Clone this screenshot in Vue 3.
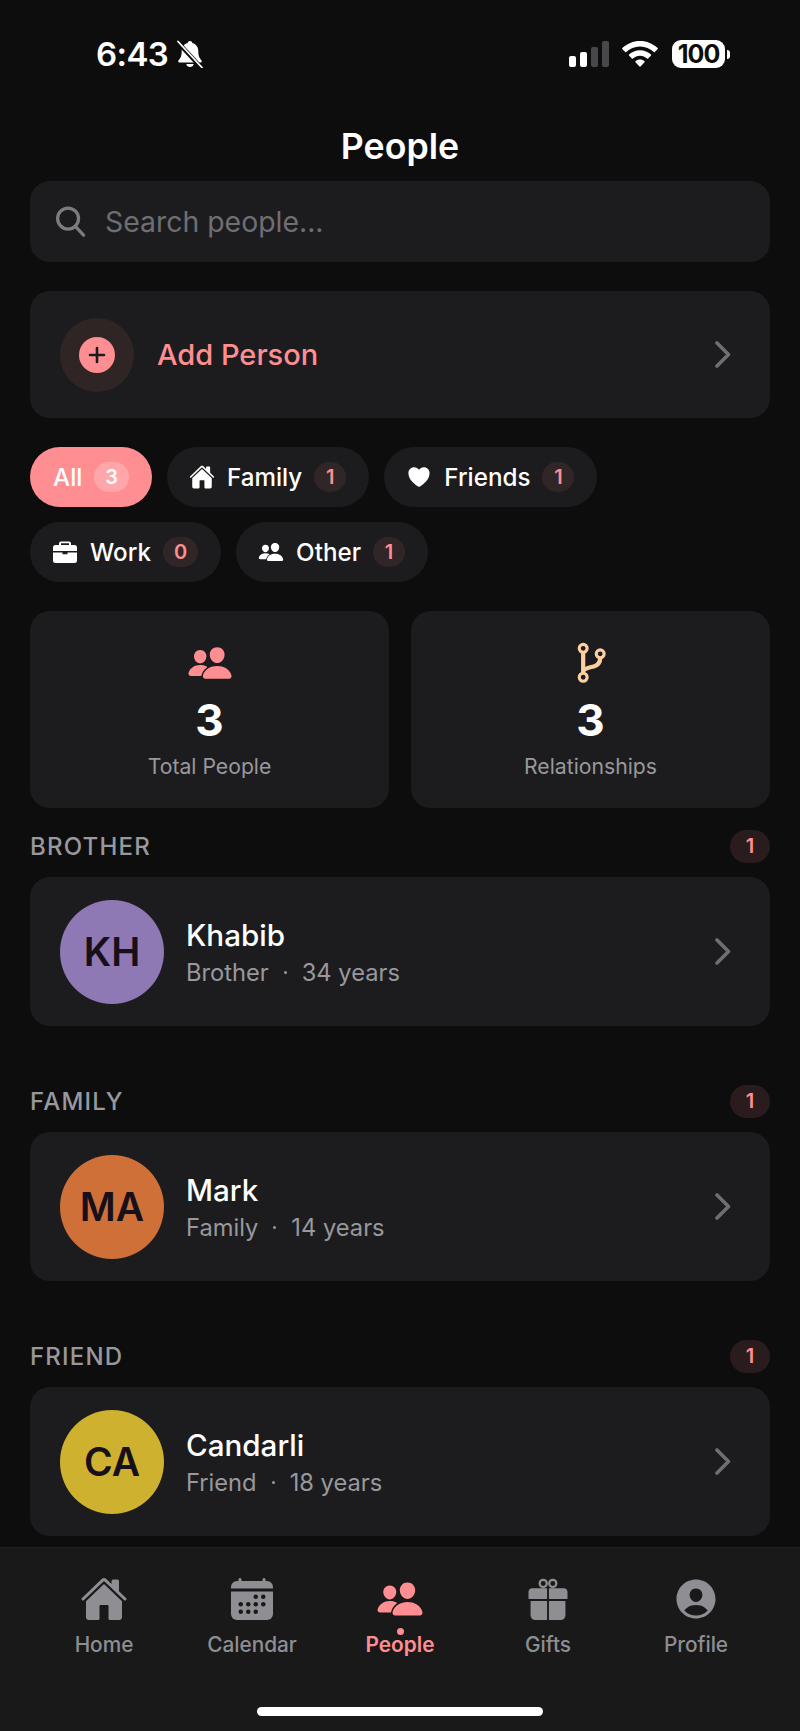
<template>
  <div class="screen">
    <div class="status">
      <div class="status-left">
        <span class="time">6:43</span>
        <svg class="bell" viewBox="0 0 28 28">
          <path fill="#fff" d="M14 1c1.300 0 2.200.9 2.300 2.100 3.800.9 6 4.100 6 8 0 4.900 1.100 7 3.200 9.300.7.800.3 2-.9 2H3.400c-1.200 0-1.600-1.200-.9-2 2.100-2.300 3.200-4.400 3.200-9.300 0-3.900 2.200-7.100 6-8C11.800 1.900 12.700 1 14 1z" />
          <path fill="#fff" d="M10.300 24h7.400c-.3 1.700-1.800 3-3.700 3s-3.400-1.300-3.700-3z" />
          <path stroke="#0d0d0d" stroke-width="4.200" d="M2.500 3l23 25" />
          <path stroke="#fff" stroke-width="1.800" stroke-linecap="round" d="M2 1.500l24 26" />
        </svg>
      </div>
      <div class="status-right">
        <div class="signal">
          <i class="on" style="height: 11px"></i>
          <i class="on" style="height: 15px"></i>
          <i style="height: 20px"></i>
          <i style="height: 26px"></i>
        </div>
        <svg class="wifi" viewBox="0 0 36 26">
          <path fill="#fff" d="M18 0c6.900 0 13.100 2.700 17.700 7.100.3.300.3.700 0 1l-2.900 3c-.3.300-.7.300-1 0C28.200 7.600 23.300 5.500 18 5.500S7.800 7.600 4.200 11.100c-.3.300-.7.300-1 0l-2.900-3c-.3-.3-.3-.7 0-1C4.900 2.700 11.100 0 18 0z" />
          <path fill="#fff" d="M18 9.200c4.300 0 8.100 1.700 11 4.300.3.300.3.700 0 1l-2.900 3c-.3.300-.7.300-1 0-1.900-1.700-4.400-2.800-7.100-2.800s-5.200 1.100-7.100 2.800c-.3.300-.7.300-1 0l-2.900-3c-.3-.3-.3-.7 0-1 2.900-2.600 6.700-4.300 11-4.300z" />
          <path fill="#fff" d="M18 18.500c1.800 0 3.300.6 4.500 1.700.3.300.3.700 0 1l-4 4.200c-.3.300-.7.300-1 0l-4-4.200c-.3-.3-.3-.7 0-1 1.200-1.100 2.700-1.700 4.500-1.700z" />
        </svg>
        <div class="battery">
          <span class="battery-level">100</span>
          <i class="battery-cap"></i>
        </div>
      </div>
    </div>

    <div class="content">
      <div class="title">People</div>

      <div class="search">
        <svg class="search-icon" viewBox="0 0 32 32" fill="none" stroke="#7b7b80" stroke-width="3.400" stroke-linecap="round">
          <circle cx="13.500" cy="13" r="10.800" />
          <path d="M21.500 21.500l8 8.500" />
        </svg>
        <span>Search people...</span>
      </div>

      <div class="add-card">
        <div class="add-ring">
          <div class="add-dot">
            <svg viewBox="0 0 20 20" width="20" height="20" stroke="#1c1c1e" stroke-width="2.600" stroke-linecap="round">
              <path d="M10 3v14M3 10h14" />
            </svg>
          </div>
        </div>
        <span class="add-label">Add Person</span>
        <svg class="chevron" viewBox="0 0 16 27" fill="none">
          <path d="M2 2l11.500 11.500L2 25" />
        </svg>
      </div>

      <div class="chips">
        <div v-for="chip in chips" :key="chip.label" class="chip" :class="{ active: chip.active }">
          <svg v-if="chip.icon === 'home'" class="chip-icon" viewBox="0 0 512 512" fill="#fff">
            <path :d="homeA" /><path :d="homeB" />
          </svg>
          <svg v-else-if="chip.icon === 'heart'" class="chip-icon" viewBox="0 0 512 512" fill="#fff">
            <path :d="heart" />
          </svg>
          <svg v-else-if="chip.icon === 'work'" class="chip-icon" viewBox="0 0 26 26" fill="#fff">
            <path fill-rule="evenodd" d="M9 2.500h8a2 2 0 012 2V6h3.500A2.500 2.500 0 0125 8.500V12H1V8.500A2.500 2.500 0 013.500 6H7V4.500a2 2 0 012-2zM9 4.300V6h8V4.300H9z" />
            <path d="M1 13.400h9.500v1.800h5v-1.800H25v8.100a2.500 2.500 0 01-2.500 2.500h-19A2.500 2.500 0 011 21.500v-8.100z" />
          </svg>
          <svg v-else-if="chip.icon === 'people'" class="chip-icon" viewBox="0 0 512 512" fill="#fff">
            <path v-for="d in people" :key="d" :d="d" />
          </svg>
          <span class="chip-label">{{ chip.label }}</span>
          <span class="chip-count">{{ chip.count }}</span>
        </div>
      </div>

      <div class="stats">
        <div class="stat">
          <svg class="stat-icon" viewBox="0 0 512 512" fill="#ff8e92">
            <path v-for="d in people" :key="d" :d="d" />
          </svg>
          <div class="stat-num">3</div>
          <div class="stat-label">Total People</div>
        </div>
        <div class="stat">
          <svg class="stat-icon" viewBox="-2 -2 50 50" fill="none" stroke="#fdd0a2" stroke-width="3.400">
            <circle cx="14.500" cy="7" r="4.300" />
            <circle cx="33" cy="13" r="4.300" />
            <circle cx="14.500" cy="38.500" r="4.300" />
            <path stroke-width="4.600" d="M14.500 11v23.500M33 17.500c0 6-3 8-7 9.200-4 1.200-9.800 2-11.500 5" />
          </svg>
          <div class="stat-num">3</div>
          <div class="stat-label">Relationships</div>
        </div>
      </div>

      <div v-for="group in groups" :key="group.title" class="group">
        <div class="group-head">
          <span class="group-title">{{ group.title }}</span>
          <span class="group-count">1</span>
        </div>
        <div class="person">
          <div class="avatar" :style="{ backgroundColor: group.color }">{{ group.initials }}</div>
          <div class="person-info">
            <div class="person-name">{{ group.name }}</div>
            <div class="person-meta">
              <span>{{ group.relation }}</span>
              <i class="meta-dot"></i>
              <span>{{ group.age }} years</span>
            </div>
          </div>
          <svg class="chevron" viewBox="0 0 16 27" fill="none">
            <path d="M2 2l11.500 11.500L2 25" />
          </svg>
        </div>
      </div>
    </div>

    <div class="tabbar">
      <div class="tabs">
        <div class="tab">
          <svg class="tab-icon" viewBox="0 0 512 512" fill="#8e8e93">
            <path :d="homeA" /><path :d="homeB" />
          </svg>
          <span>Home</span>
        </div>
        <div class="tab">
          <svg class="tab-icon" viewBox="0 0 512 512" fill="#8e8e93">
            <path :d="calendarTop" />
            <path :d="calendarBody" />
            <circle v-for="dot in calendarDots" :key="dot.join()" :cx="dot[0]" :cy="dot[1]" r="24" fill="#19191a" />
          </svg>
          <span>Calendar</span>
        </div>
        <div class="tab active">
          <svg class="tab-icon" viewBox="0 0 512 512" fill="#ff8e92">
            <path v-for="d in people" :key="d" :d="d" />
          </svg>
          <i class="tab-dot"></i>
          <span>People</span>
        </div>
        <div class="tab">
          <svg class="tab-icon" viewBox="0 0 512 512" fill="#8e8e93">
            <circle cx="205" cy="90" r="38" fill="none" stroke="#8e8e93" stroke-width="24" />
            <circle cx="307" cy="90" r="38" fill="none" stroke="#8e8e93" stroke-width="24" />
            <path d="M90 140h156v116H48v-74a42 42 0 0142-42zM266 140h156a42 42 0 0142 42v74H266z" />
            <path d="M70 277h176v203H120a50 50 0 01-50-50zM266 277h176v153a50 50 0 01-50 50H266z" />
          </svg>
          <span>Gifts</span>
        </div>
        <div class="tab">
          <svg class="tab-icon" viewBox="0 0 512 512" fill="#8e8e93">
            <path :d="profile" />
          </svg>
          <span>Profile</span>
        </div>
      </div>
      <div class="home-bar"></div>
    </div>
  </div>
</template>

<script setup>
  const homeA =
    "M261.56 101.28a8 8 0 00-11.06 0L66.4 277.15a8 8 0 00-2.47 5.79L63.9 448a32 32 0 0032 32H192a16 16 0 0016-16V328a8 8 0 018-8h80a8 8 0 018 8v136a16 16 0 0016 16h96.06a32 32 0 0032-32V282.94a8 8 0 00-2.47-5.79z";
  const homeB =
    "M490.91 244.15l-74.8-71.56V64a16 16 0 00-16-16h-48a16 16 0 00-16 16v32l-57.92-55.38C272.77 35.14 264.71 32 256 32c-8.68 0-16.72 3.14-22.14 8.63l-212.7 203.5c-6.22 6-7 15.87-1.34 22.37A16 16 0 0043 267.56L250.5 69.28a8 8 0 0111.06 0l207.52 198.28a16 16 0 0022.59-.44c6.14-6.36 5.63-16.86-.76-22.97z";
  const heart =
    "M256 448a32 32 0 01-18-5.57c-78.59-53.35-112.62-90.77-131.39-113.64-40-48.75-59.15-98.8-58.61-153C48.63 114.52 98.46 64 159.08 64c44.08 0 74.61 24.83 92.39 45.51a6 6 0 009.06 0C278.31 88.81 308.84 64 352.92 64c60.62 0 110.45 50.52 111.08 112.64.54 54.21-18.63 104.26-58.61 153-18.77 22.87-52.8 60.29-131.39 113.83a32 32 0 01-18 5.53z";
  const people = [
    "M336 256c-20.56 0-40.44-9.18-56-25.84-15.13-16.25-24.37-37.92-26-61-1.74-24.62 5.77-47.26 21.14-63.76S312 80 336 80c23.83 0 45.38 9.06 60.7 25.52 15.47 16.62 23 39.22 21.26 63.63-1.67 23.11-10.9 44.77-26 61C376.44 246.82 356.57 256 336 256z",
    "M467.83 432H204.18a27.71 27.71 0 01-22-10.67 30.22 30.22 0 01-5.26-25.79c8.42-33.81 29.28-61.85 60.32-81.08C264.79 297.4 299.86 288 336 288c36.85 0 71 9 98.71 26.05 31.11 19.13 52 47.33 60.38 81.55a30.27 30.27 0 01-5.32 25.78A27.68 27.68 0 01467.83 432z",
    "M147 260c-35.19 0-66.13-32.72-69-72.93-1.42-20.6 5-39.65 18-53.62 12.86-13.83 31-21.45 51-21.45s38 7.66 50.93 21.57c13.1 14.08 19.5 33.09 18 53.52-2.87 40.2-33.8 72.91-69 72.91z",
    "M212.66 291.45c-17.59-8.6-40.42-12.9-65.65-12.9-29.46 0-58.07 7.68-80.57 21.62-25.51 15.83-42.67 38.88-49.6 66.71a27.39 27.39 0 005.36 23.36A25.32 25.32 0 0042.34 400h111a8 8 0 007.87-6.57c.11-.63.25-1.26.41-1.88 8.48-34.06 28.35-62.84 57.71-83.82a8 8 0 00-.63-13.39c-1.57-.92-3.37-1.89-6.05-3.19z",
  ];
  const calendarTop =
    "M480 128a64 64 0 00-64-64h-16V48.45c0-8.61-6.62-16-15.23-16.43A16 16 0 00368 48v16H144V48.45c0-8.61-6.62-16-15.23-16.43A16 16 0 00112 48v16H96a64 64 0 00-64 64v12a4 4 0 004 4h440a4 4 0 004-4z";
  const calendarBody =
    "M32 416a64 64 0 0064 64h320a64 64 0 0064-64V179a3 3 0 00-3-3H35a3 3 0 00-3 3z";
  const calendarDots = [
    [296, 232], [376, 232],
    [136, 312], [216, 312], [296, 312], [376, 312],
    [136, 392], [216, 392], [296, 392],
  ];
  const profile =
    "M256 48C141.31 48 48 141.31 48 256s93.31 208 208 208 208-93.31 208-208S370.69 48 256 48zm-50.22 116.82C218.45 151.39 236.28 144 256 144s37.39 7.44 50.11 20.94c12.89 13.68 19.16 32.06 17.68 51.82C320.83 256 290.43 288 256 288s-64.89-32-67.79-71.25c-1.47-19.92 4.79-38.36 17.57-51.93zM256 432a175.49 175.49 0 01-126-53.22 122.91 122.91 0 0135.14-33.44C190.63 329 222.89 320 256 320s65.37 9 90.83 25.34A122.87 122.87 0 01382 378.78 175.45 175.45 0 01256 432z";

  const chips = [
    { label: "All", count: 3, active: true },
    { label: "Family", count: 1, icon: "home" },
    { label: "Friends", count: 1, icon: "heart" },
    { label: "Work", count: 0, icon: "work" },
    { label: "Other", count: 1, icon: "people" },
  ];

  const groups = [
    { title: "BROTHER", name: "Khabib", relation: "Brother", age: 34, initials: "KH", color: "#8e79b4" },
    { title: "FAMILY", name: "Mark", relation: "Family", age: 14, initials: "MA", color: "#cf7038" },
    { title: "FRIEND", name: "Candarli", relation: "Friend", age: 18, initials: "CA", color: "#ceb22f" },
  ];
</script>

<style>
  html,
  body {
    margin: 0;
    background: #0d0d0d;
  }
</style>

<style scoped>
  .screen {
    width: 800px;
    height: 1731px;
    display: flex;
    flex-direction: column;
    overflow: hidden;
    background: #0d0d0d;
    color: #fff;
    font-family: Inter, "Liberation Sans", sans-serif;
  }

  .status {
    flex: none;
    height: 112px;
    box-sizing: border-box;
    padding: 36px 70px 0 96px;
    display: flex;
    justify-content: space-between;
    align-items: flex-start;
  }
  .status-left,
  .status-right {
    height: 36px;
    display: flex;
    align-items: center;
  }
  .time {
    font-size: 33px;
    font-weight: 600;
    letter-spacing: -0.6px;
    line-height: 36px;
  }
  .bell {
    width: 28px;
    height: 28px;
    margin-left: 8px;
  }
  .signal {
    display: flex;
    align-items: flex-end;
    gap: 4px;
    height: 26px;
  }
  .signal i {
    width: 7px;
    border-radius: 2px;
    background: #48484a;
  }
  .signal .on {
    background: #fff;
  }
  .wifi {
    width: 36px;
    height: 26px;
    margin-left: 13px;
  }
  .battery {
    display: flex;
    align-items: center;
    margin-left: 14px;
  }
  .battery-level {
    width: 53px;
    height: 28px;
    border-radius: 9px;
    background: #fff;
    color: #0d0d0d;
    font-size: 25px;
    font-weight: 700;
    letter-spacing: -1px;
    line-height: 28px;
    text-align: center;
  }
  .battery-cap {
    width: 3px;
    height: 9px;
    margin-left: 2px;
    border-radius: 0 3px 3px 0;
    background: #fff;
  }

  .content {
    flex: 1;
    min-height: 0;
    overflow: hidden;
    padding: 0 30px;
  }
  .title {
    height: 69px;
    line-height: 69px;
    text-align: center;
    font-size: 35.700px;
    font-weight: 600;
  }

  .search {
    height: 81px;
    display: flex;
    align-items: center;
    gap: 19px;
    padding: 0 25px;
    border-radius: 20px;
    background: #1c1c1e;
    color: #6e6e73;
    font-size: 28.400px;
  }
  .search-icon {
    width: 31px;
    height: 31px;
    flex: none;
  }

  .add-card {
    height: 127px;
    margin-top: 29px;
    display: flex;
    align-items: center;
    padding: 0 39px 0 30px;
    border-radius: 20px;
    background: #1c1c1e;
  }
  .add-ring {
    width: 74px;
    height: 74px;
    display: flex;
    align-items: center;
    justify-content: center;
    border-radius: 50%;
    background: #2f2525;
  }
  .add-dot {
    width: 36px;
    height: 36px;
    display: flex;
    align-items: center;
    justify-content: center;
    border-radius: 50%;
    background: #ff8e92;
  }
  .add-label {
    flex: 1;
    margin-left: 23px;
    color: #ff8e92;
    font-size: 29px;
    font-weight: 500;
  }
  .chevron {
    width: 16px;
    height: 27px;
    flex: none;
    stroke: #6e6e73;
    stroke-width: 3.600;
    stroke-linecap: round;
    stroke-linejoin: round;
  }

  .chips {
    display: flex;
    flex-wrap: wrap;
    gap: 15px;
    margin-top: 29px;
  }
  .chip {
    height: 60px;
    display: flex;
    align-items: center;
    padding: 0 23px 0 22px;
    border-radius: 30px;
    background: #1c1c1e;
    font-size: 24.200px;
    font-weight: 500;
  }
  .chip-label {
    margin-top: 1px;
  }
  .chip-icon {
    width: 26px;
    height: 26px;
    margin-right: 12px;
  }
  .chip-count {
    box-sizing: border-box;
    min-width: 32px;
    height: 30px;
    margin-left: 12px;
    padding: 0 11px;
    border-radius: 15px;
    background: rgba(255, 142, 146, 0.09);
    color: #ff8e92;
    font-size: 20px;
    font-weight: 600;
    line-height: 30px;
    text-align: center;
  }
  .chip.active {
    padding-left: 23px;
    background: #ff8e92;
  }
  .chip.active .chip-count {
    background: rgba(255, 255, 255, 0.22);
    color: #fff;
  }

  .stats {
    display: grid;
    grid-template-columns: 1fr 1fr;
    gap: 22px;
    margin-top: 29px;
  }
  .stat {
    height: 197px;
    box-sizing: border-box;
    display: flex;
    flex-direction: column;
    align-items: center;
    padding-top: 29px;
    border-radius: 20px;
    background: #1c1c1e;
  }
  .stat-icon {
    width: 46px;
    height: 46px;
  }
  .stat-num {
    margin-top: 7px;
    font-size: 44px;
    font-weight: 700;
    line-height: 54px;
  }
  .stat-label {
    margin-top: 6px;
    color: #98989d;
    font-size: 21.200px;
    line-height: 26px;
  }

  .group {
    margin-top: 59px;
  }
  .stats + .group {
    margin-top: 22px;
  }
  .group-head {
    height: 33px;
    display: flex;
    justify-content: space-between;
    align-items: center;
  }
  .group-title {
    color: #98989d;
    font-size: 24px;
    font-weight: 500;
    letter-spacing: 1.200px;
  }
  .group-count {
    width: 40px;
    height: 33px;
    border-radius: 17px;
    background: rgba(255, 142, 146, 0.12);
    color: #ff8e92;
    font-size: 20px;
    font-weight: 600;
    line-height: 33px;
    text-align: center;
  }
  .person {
    height: 149px;
    margin-top: 14px;
    display: flex;
    align-items: center;
    padding: 0 39px 0 30px;
    border-radius: 20px;
    background: #1c1c1e;
  }
  .avatar {
    width: 104px;
    height: 104px;
    flex: none;
    display: flex;
    align-items: center;
    justify-content: center;
    border-radius: 50%;
    color: #17101a;
    font-size: 39px;
    font-weight: 600;
  }
  .person-info {
    flex: 1;
    margin-left: 22px;
  }
  .person-name {
    font-size: 29.600px;
    font-weight: 500;
    line-height: 40px;
  }
  .person-meta {
    display: flex;
    align-items: center;
    margin-top: 2px;
    color: #98989d;
    font-size: 23.700px;
    line-height: 32px;
  }
  .meta-dot {
    width: 3px;
    height: 3px;
    margin: 0 15px;
    border-radius: 50%;
    background: #98989d;
  }

  .tabbar {
    flex: none;
    height: 184px;
    box-sizing: border-box;
    display: flex;
    flex-direction: column;
    border-top: 1px solid #202022;
    background: #19191a;
  }
  .tabs {
    display: flex;
    padding: 27px 30px 0;
  }
  .tab {
    position: relative;
    flex: 1;
    display: flex;
    flex-direction: column;
    align-items: center;
    color: #8e8e93;
    font-size: 20.800px;
    font-weight: 500;
    line-height: 26px;
  }
  .tab span {
    margin-top: 9px;
  }
  .tab-icon {
    width: 48px;
    height: 48px;
  }
  .tab.active {
    color: #ff8e92;
    font-weight: 600;
  }
  .tab-dot {
    position: absolute;
    top: 53px;
    left: 50%;
    width: 7px;
    height: 7px;
    margin-left: -3.500px;
    border-radius: 50%;
    background: #ff8e92;
  }
  .home-bar {
    width: 286px;
    height: 9px;
    margin: auto auto 15px;
    border-radius: 5px;
    background: #fff;
  }
</style>
